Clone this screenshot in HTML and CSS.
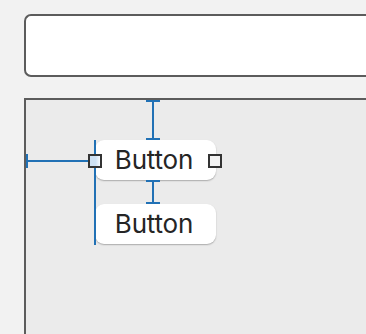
FILE: index.html
```html
<!DOCTYPE html>
<html>
<head>
<meta charset="utf-8">
<link rel="stylesheet" href="styles.css">
</head>
<body>
<div class="field"></div>
<div class="panel">
  <div class="stack">
    <div class="btn">Button</div>
    <div class="btn">Button</div>
  </div>
  <div class="c vline top-line"></div>
  <div class="c hcap top-cap1"></div>
  <div class="c hcap top-cap2"></div>
  <div class="c vline mid-line"></div>
  <div class="c hcap mid-cap1"></div>
  <div class="c hcap mid-cap2"></div>
  <div class="c hline left-line"></div>
  <div class="c vcap left-cap"></div>
  <div class="c vline guide"></div>
  <div class="handle handle-left"></div>
  <div class="handle handle-right"></div>
</div>
</body>
</html>
```

FILE: styles.css
```css
html, body {
  margin: 0;
  padding: 0;
  background: #f2f2f2;
  overflow: hidden;
  width: 366px;
  height: 334px;
}
body {
  font-family: Inter, "Noto Sans", sans-serif;
}
.field {
  margin: 14px 0 0 24px;
  height: 59px;
  border: 2px solid #5c5c5c;
  border-right: none;
  border-radius: 7px 0 0 7px;
  background: #fff;
}
.panel {
  position: relative;
  margin: 21px 0 0 24px;
  height: 234px;
  border-top: 2px solid #5c5c5c;
  border-left: 2px solid #5c5c5c;
  background: #ebebeb;
}
.stack {
  display: flex;
  flex-direction: column;
  gap: 24px;
  padding: 40px 0 0 69px;
}
.btn {
  width: 121px;
  height: 40px;
  box-sizing: border-box;
  background: #fff;
  border-radius: 9px;
  box-shadow: 0 1px 1.5px rgba(0,0,0,0.28);
  display: flex;
  align-items: center;
  justify-content: center;
  font-size: 26px;
  color: #252525;
  padding: 0 3px 1px 0;
  letter-spacing: -0.2px;
}
.c {
  position: absolute;
  background: #2171b5;
}
.vline { width: 2px; }
.hline { height: 2px; }
.hcap { width: 14px; height: 2px; }
.vcap { width: 2px; height: 14px; }
.top-line { left: 126px; top: 0; height: 40px; }
.top-cap1 { left: 120px; top: 0; }
.top-cap2 { left: 120px; top: 38px; }
.mid-line { left: 126px; top: 80px; height: 24px; }
.mid-cap1 { left: 120px; top: 80px; }
.mid-cap2 { left: 120px; top: 102px; }
.left-line { left: 0; top: 60px; width: 62px; }
.left-cap { left: 0; top: 54px; }
.guide { left: 68px; top: 40px; height: 105px; }
.handle {
  position: absolute;
  top: 54px;
  width: 14px;
  height: 14px;
  box-sizing: border-box;
  border: 2px solid #333;
}
.handle-left {
  left: 62px;
  background: linear-gradient(to right, #cde0f2 0, #cde0f2 55%, #f4f8fc 100%);
}
.handle-right {
  left: 182px;
  background: #f3f3f3;
}
```
